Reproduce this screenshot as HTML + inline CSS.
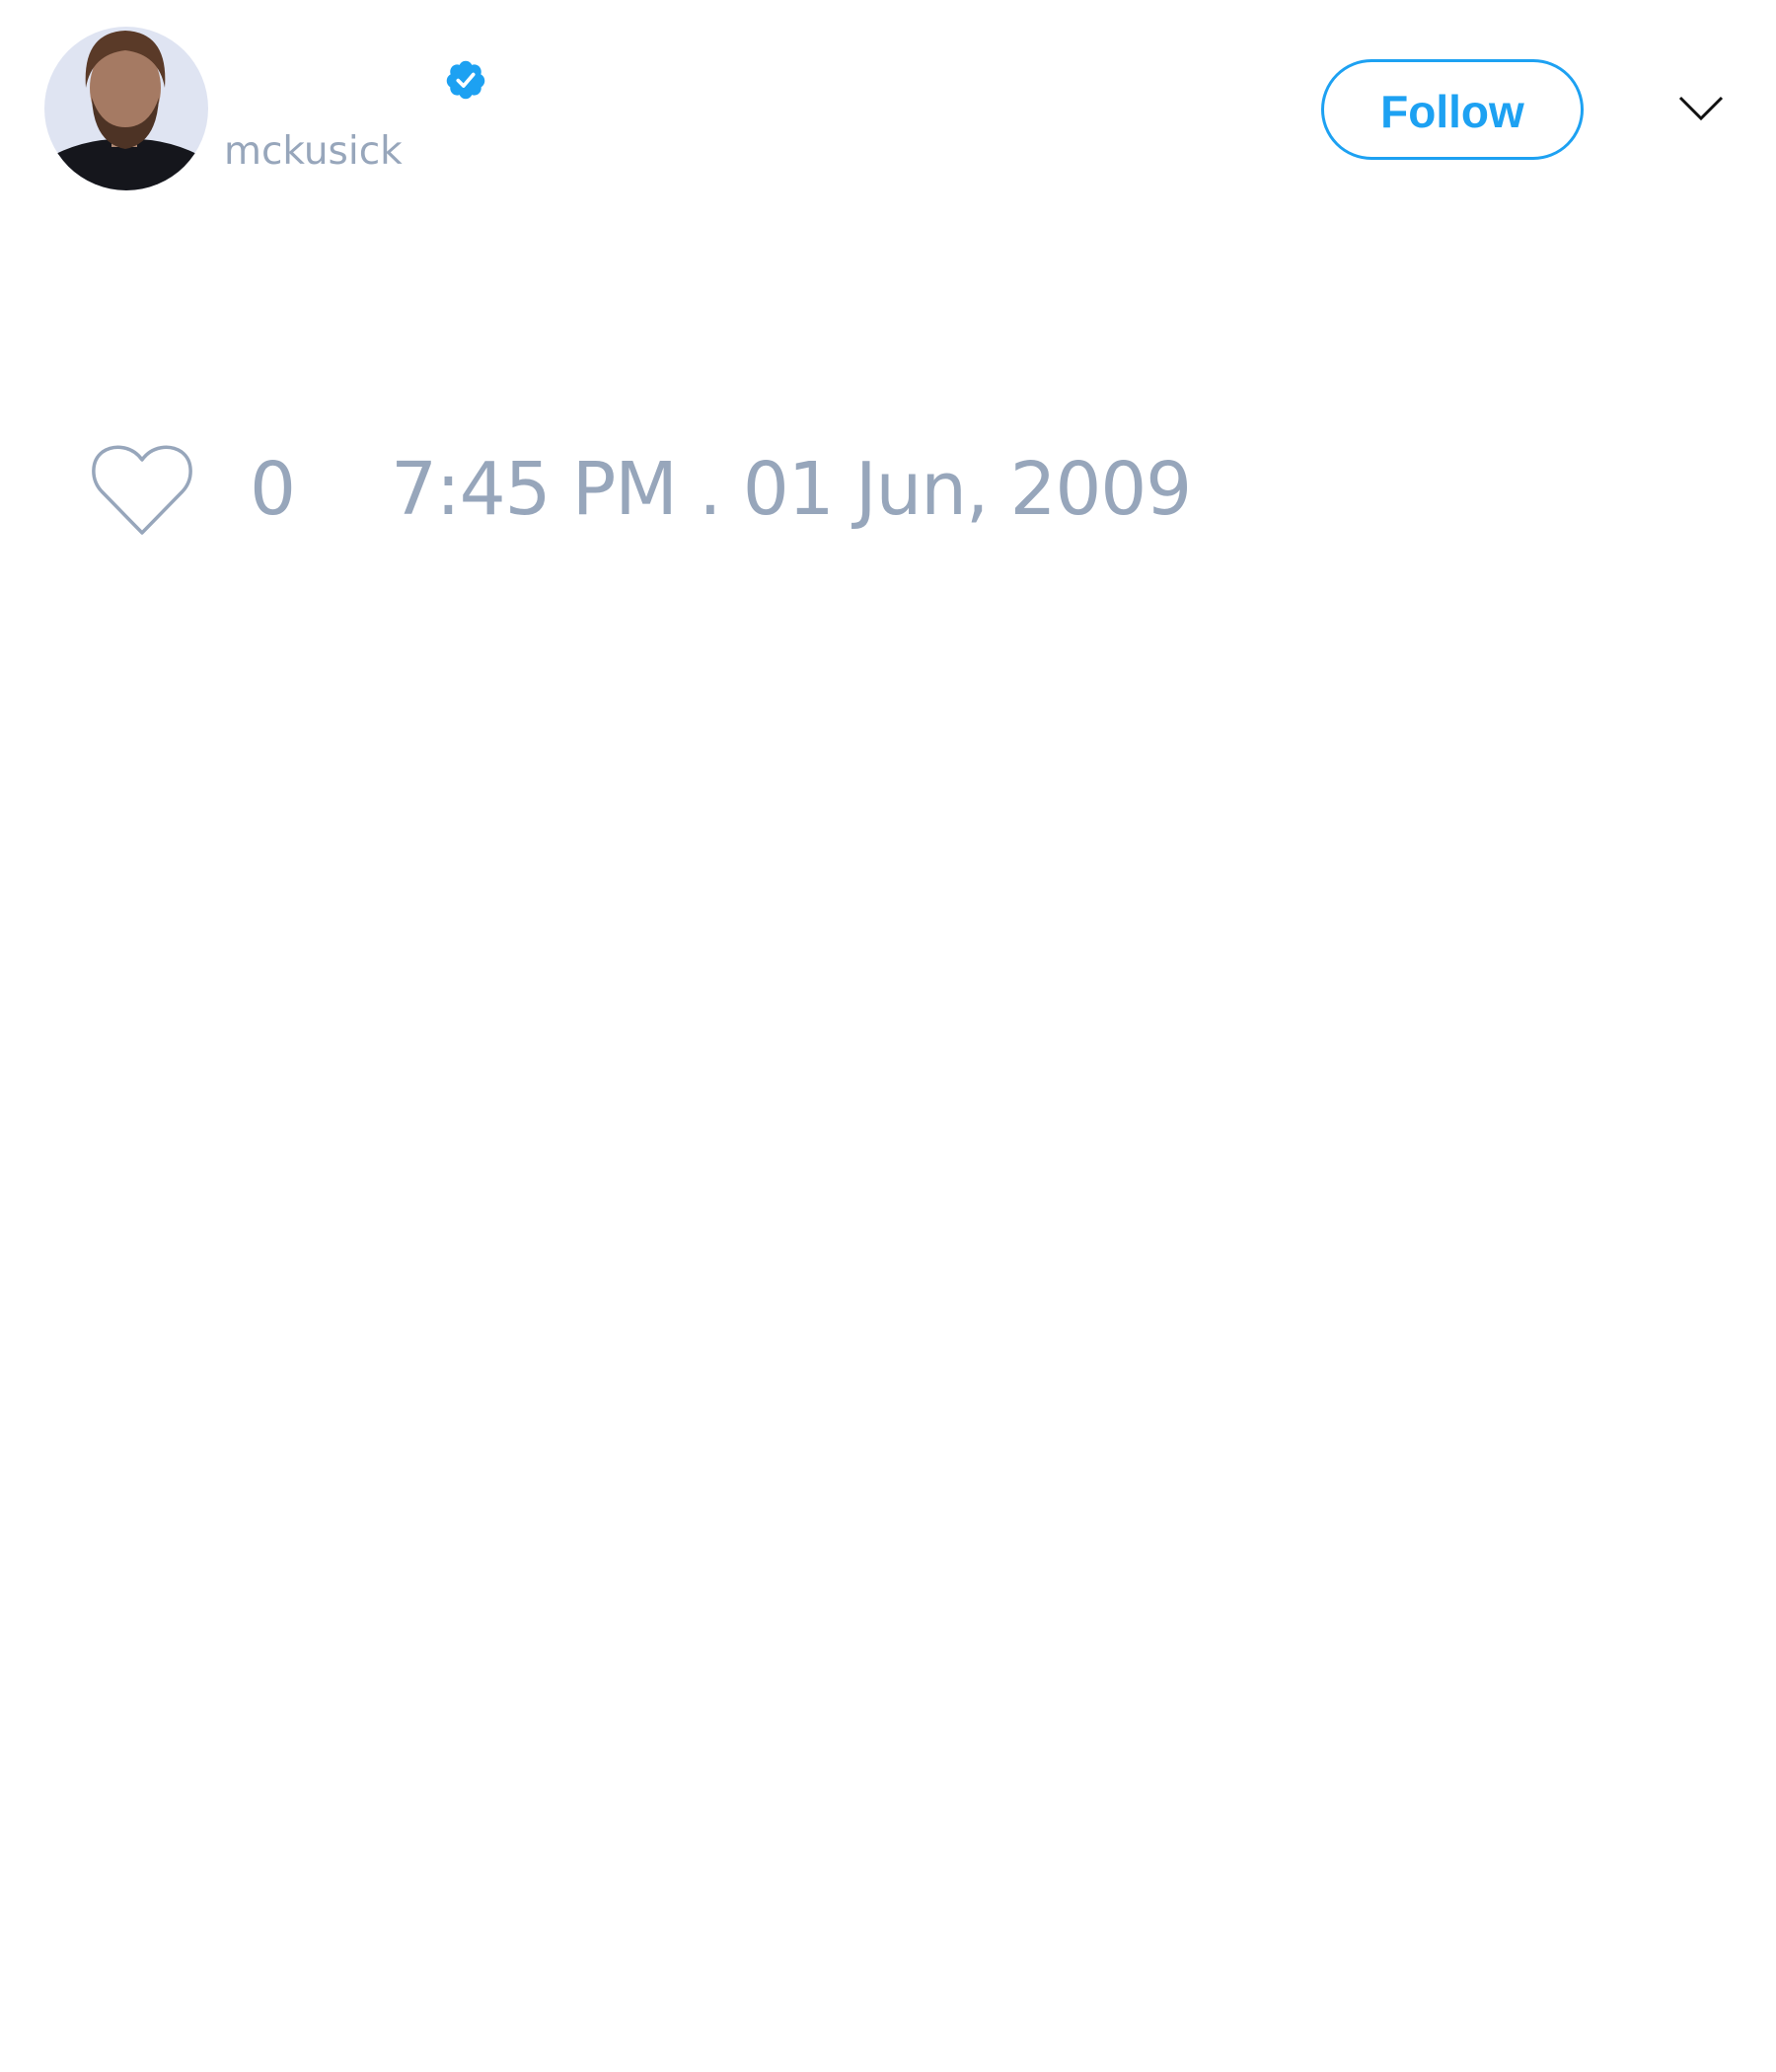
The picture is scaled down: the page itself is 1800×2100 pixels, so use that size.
<!DOCTYPE html>
<html><head><meta charset="utf-8"><style>
html,body{margin:0;padding:0;background:#fff;width:1800px;height:2100px;overflow:hidden;font-family:"DejaVu Sans","Liberation Sans",sans-serif;}
.abs{position:absolute;}
.handle{left:227px;top:134px;font-size:39px;color:#97a6bb;line-height:1;}
.follow{left:1339px;top:60px;width:266px;height:102px;border:3px solid #1da1f2;border-radius:52px;box-sizing:border-box;color:#1da1f2;font-weight:bold;font-size:46px;display:flex;align-items:center;justify-content:center;font-family:"Liberation Sans",sans-serif;padding-top:4px;}
.num{font-size:74px;color:#97a6bb;line-height:1;white-space:nowrap;}
</style></head><body>
<svg class="abs" style="left:45px;top:27px" width="166" height="166" viewBox="0 0 166 166">
<defs><clipPath id="c"><circle cx="83" cy="83" r="83"/></clipPath></defs>
<g clip-path="url(#c)">
<rect width="166" height="166" fill="#dfe4f2"/>
<path d="M0 135 Q40 112 83 114 Q126 112 166 135 L166 166 L0 166Z" fill="#15161c"/>
<rect x="68" y="100" width="26" height="22" fill="#b08a75"/>
<ellipse cx="82" cy="62" rx="36" ry="46" fill="#a57a63"/>
<path d="M42 62 Q38 6 82 4 Q126 6 122 62 Q116 28 82 24 Q48 28 42 62Z" fill="#5a3a28"/>
<path d="M48 72 Q50 118 82 124 Q114 118 116 72 Q106 102 82 102 Q58 102 48 72Z" fill="#4d3325"/>
</g></svg>
<svg class="abs" style="left:450px;top:59px" width="44" height="44" viewBox="0 0 24 24">
<path fill="#1da1f2" d="M22.5 12.5c0-1.58-.875-2.95-2.148-3.6.154-.435.238-.905.238-1.4 0-2.210-1.71-3.998-3.818-3.998-.47 0-.92.084-1.336.25C14.818 2.415 13.51 1.5 12 1.5s-2.816.917-3.437 2.250c-.415-.165-.866-.25-1.336-.25-2.110 0-3.818 1.790-3.818 4 0 .494.083.964.237 1.400-1.272.65-2.147 2.018-2.147 3.600 0 1.495.782 2.798 1.942 3.486-.02.17-.032.34-.032.514 0 2.210 1.708 4 3.818 4 .47 0 .92-.086 1.335-.25.62 1.334 1.926 2.25 3.437 2.25 1.512 0 2.818-.916 3.437-2.25.415.163.865.248 1.336.248 2.110 0 3.818-1.790 3.818-4 0-.174-.012-.344-.033-.513 1.158-.687 1.943-1.990 1.943-3.484z"/>
<path d="M7.8 12.3l3 3 5.4-6.3" fill="none" stroke="#fff" stroke-width="2" stroke-linecap="round" stroke-linejoin="round"/>
</svg>
<div class="abs handle">mckusick</div>
<div class="abs follow">Follow</div>
<svg class="abs" style="left:1700px;top:96px" width="48" height="30" viewBox="0 0 48 30">
<path d="M3 3 L24 24 L45 3" fill="none" stroke="#111" stroke-width="3"/>
</svg>
<svg class="abs" style="left:90px;top:450px" width="108" height="95" viewBox="0 0 108 95">
<path d="M54 16 C44 2 26 0 14 8 C2 17 2 36 13 48 L54 90 L95 48 C106 36 106 17 94 8 C82 0 64 2 54 16Z" fill="none" stroke="#97a6bb" stroke-width="3.5" stroke-linejoin="round"/>
</svg>
<div class="abs num" style="left:253px;top:459px">0</div>
<div class="abs num" style="left:396px;top:459px;letter-spacing:-1.2px">7:45 PM . 01 Jun, 2009</div>
</body></html>
